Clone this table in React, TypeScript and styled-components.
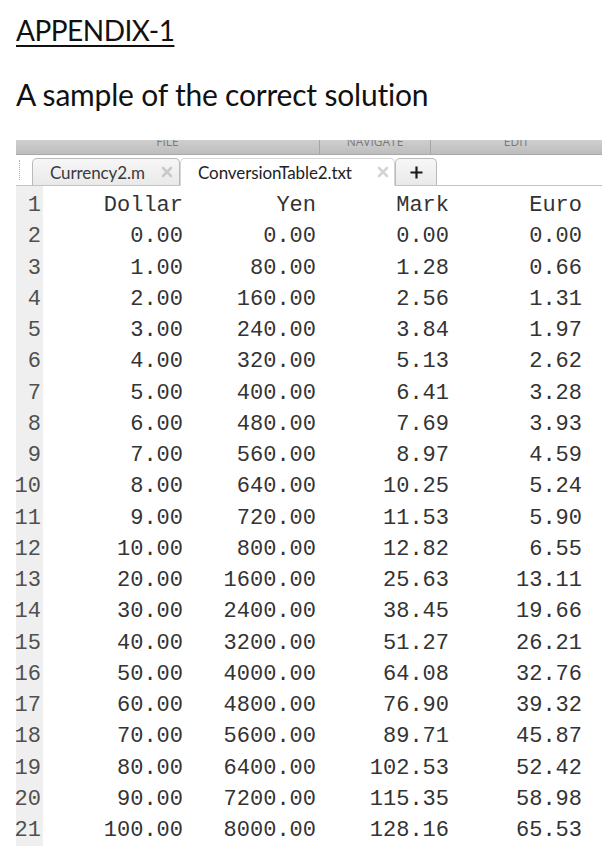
import React from "react";
import styled, { createGlobalStyle } from "styled-components";

const Global = createGlobalStyle`
  html, body { margin: 0; padding: 0; background: #ffffff; }
  body { width: 602px; height: 855px; overflow: hidden; }
`;

const Page = styled.div`
  padding: 12px 0 0 16px;
  font-family: "Lato", "Open Sans", sans-serif;
  color: #111;
`;

const Heading = styled.h1`
  margin: 0;
  padding-top: 1px;
  font-weight: 400;
  font-size: 28px;
  line-height: 35px;
  text-decoration: underline;
  text-decoration-thickness: 2px;
  text-underline-offset: 4px;
  letter-spacing: -0.5px;
`;

const Subtitle = styled.h2`
  margin: 28px 0 0;
  font-weight: 400;
  font-size: 30px;
  line-height: 36px;
  letter-spacing: -0.2px;
`;

const Window = styled.div`
  margin-top: 28px;
`;

const Ribbon = styled.div`
  display: grid;
  grid-template-columns: 303px 111px 1fr;
  height: 14px;
  overflow: hidden;
  background: linear-gradient(#cfcfcf, #bdbdbd);
  border-bottom: 1px solid #a9a9a9;
`;

const RibbonLabel = styled.div<{ $divider?: boolean }>`
  text-align: center;
  font-family: "Open Sans", sans-serif;
  font-size: 12px;
  line-height: 12px;
  color: #7a7a7a;
  margin-top: -4px;
  border-left: ${(p) => (p.$divider ? "1px solid #a6a6a6" : "none")};
`;

const TabStrip = styled.div`
  display: flex;
  align-items: flex-end;
  height: 31px;
  background: #ffffff;
`;

const StripLead = styled.div`
  width: 16px;
  height: 100%;
  box-sizing: border-box;
  border-bottom: 1px solid #c4c4c4;
  display: flex;
  align-items: center;
`;

const Dots = styled.div`
  margin-left: 3px;
  width: 0;
  height: 20px;
  border-left: 1px dotted #b0b0b0;
`;

const Tab = styled.div<{ $active?: boolean; $w: number }>`
  width: ${(p) => p.$w}px;
  height: 28px;
  box-sizing: border-box;
  display: flex;
  align-items: center;
  border: 1px solid ${(p) => (p.$active ? "#d6d6d6" : "#b9b9b9")};
  border-bottom: ${(p) => (p.$active ? "1px solid #ffffff" : "1px solid #c4c4c4")};
  border-radius: 5px 5px 0 0;
  background: ${(p) =>
    p.$active ? "#ffffff" : "linear-gradient(#f6f6f6, #e9e9e9)"};
  font-family: "Lato", sans-serif;
  font-size: 17px;
  letter-spacing: -0.1px;
  color: ${(p) => (p.$active ? "#222" : "#3a3a3a")};
  padding-left: 17px;
`;

const TabName = styled.span<{ $w: number }>`
  width: ${(p) => p.$w}px;
  white-space: nowrap;
`;

const PlusTab = styled.div`
  width: 42px;
  height: 28px;
  box-sizing: border-box;
  display: flex;
  align-items: center;
  justify-content: center;
  border: 1px solid #b9b9b9;
  border-bottom: 1px solid #c4c4c4;
  border-radius: 5px 5px 0 0;
  background: linear-gradient(#f6f6f6, #e9e9e9);
`;

const StripRest = styled.div`
  flex: 1;
  height: 100%;
  box-sizing: border-box;
  border-bottom: 1px solid #c4c4c4;
`;

const Editor = styled.div`
  display: flex;
  padding-bottom: 7px;
`;

const Gutter = styled.div`
  width: 27px;
  background: #efefef;
  padding-top: 4px;
`;

const LineNo = styled.div`
  font-family: "Liberation Mono", "Courier New", monospace;
  font-size: 22px;
  line-height: 31.25px;
  height: 31.25px;
  color: #505050;
  text-align: right;
  padding-right: 2px;
  white-space: nowrap;
  direction: rtl;
`;

const Code = styled.div`
  display: grid;
  grid-template-columns: repeat(4, 133px);
  grid-auto-rows: 31.25px;
  padding: 4px 0 0 7px;
  font-family: "Liberation Mono", "Courier New", monospace;
  font-size: 22px;
  line-height: 31.25px;
  color: #333333;
`;

const Cell = styled.div`
  text-align: right;
  white-space: pre;
`;

const CloseIcon = ({ color }: { color: string }) => (
  <svg width="12" height="12" viewBox="0 0 12 12">
    <path d="M2 2 L10 10 M10 2 L2 10" stroke={color} strokeWidth="2.6" strokeLinecap="round" />
  </svg>
);

const PlusIcon = () => (
  <svg width="15" height="15" viewBox="0 0 15 15">
    <path d="M7.5 1.5 V13.5 M1.5 7.5 H13.5" stroke="#1a1a1a" strokeWidth="2.2" />
  </svg>
);

const rows: string[][] = [
  ["Dollar", "Yen", "Mark", "Euro"],
  ["0.00", "0.00", "0.00", "0.00"],
  ["1.00", "80.00", "1.28", "0.66"],
  ["2.00", "160.00", "2.56", "1.31"],
  ["3.00", "240.00", "3.84", "1.97"],
  ["4.00", "320.00", "5.13", "2.62"],
  ["5.00", "400.00", "6.41", "3.28"],
  ["6.00", "480.00", "7.69", "3.93"],
  ["7.00", "560.00", "8.97", "4.59"],
  ["8.00", "640.00", "10.25", "5.24"],
  ["9.00", "720.00", "11.53", "5.90"],
  ["10.00", "800.00", "12.82", "6.55"],
  ["20.00", "1600.00", "25.63", "13.11"],
  ["30.00", "2400.00", "38.45", "19.66"],
  ["40.00", "3200.00", "51.27", "26.21"],
  ["50.00", "4000.00", "64.08", "32.76"],
  ["60.00", "4800.00", "76.90", "39.32"],
  ["70.00", "5600.00", "89.71", "45.87"],
  ["80.00", "6400.00", "102.53", "52.42"],
  ["90.00", "7200.00", "115.35", "58.98"],
  ["100.00", "8000.00", "128.16", "65.53"],
];

export default function App() {
  return (
    <>
      <Global />
      <Page>
        <Heading>APPENDIX-1</Heading>
        <Subtitle>A sample of the correct solution</Subtitle>
        <Window>
          <Ribbon>
            <RibbonLabel>FILE</RibbonLabel>
            <RibbonLabel $divider>NAVIGATE</RibbonLabel>
            <RibbonLabel $divider>EDIT</RibbonLabel>
          </Ribbon>
          <TabStrip>
            <StripLead>
              <Dots />
            </StripLead>
            <Tab $w={148}>
              <TabName $w={111}>Currency2.m</TabName>
              <CloseIcon color="#c9c9c9" />
            </Tab>
            <Tab $active $w={215}>
              <TabName $w={179}>ConversionTable2.txt</TabName>
              <CloseIcon color="#d4d4d4" />
            </Tab>
            <PlusTab>
              <PlusIcon />
            </PlusTab>
            <StripRest />
          </TabStrip>
          <Editor>
            <Gutter>
              {rows.map((_, i) => (
                <LineNo key={i}>{i + 1}</LineNo>
              ))}
            </Gutter>
            <Code>
              {rows.map((r, i) =>
                r.map((c, j) => <Cell key={`${i}-${j}`}>{c}</Cell>)
              )}
            </Code>
          </Editor>
        </Window>
      </Page>
    </>
  );
}
